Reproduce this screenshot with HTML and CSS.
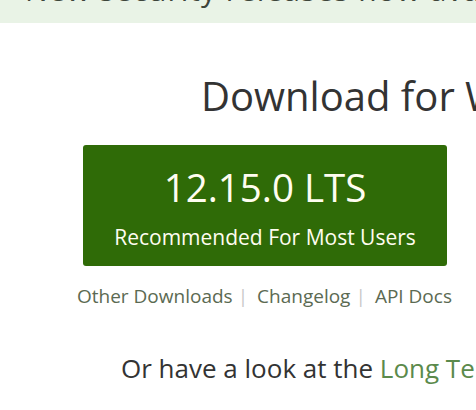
FILE: index.html
```html
<!DOCTYPE html>
<html lang="en">
<head>
<meta charset="utf-8">
<title>Download</title>
<link rel="stylesheet" href="styles.css">
</head>
<body>
<div class="banner"><p class="banner-text">New <span class="banner-link">security releases</span> now available for all release lines</p></div>
<main class="main">
  <h1 class="title">Download for Windows (x64)</h1>
  <a class="btn" href="#">
    <span class="btn-version">12.15.0 LTS</span>
    <span class="btn-sub">Recommended For Most Users</span>
  </a>
  <nav class="links">
    <a class="link" href="#">Other Downloads</a><span class="sep">|</span>
    <a class="link" href="#">Changelog</a><span class="sep">|</span>
    <a class="link" href="#">API Docs</a>
  </nav>
  <p class="more">Or have a look at the <a class="more-link" href="#">Long Term Support (LTS) schedule.</a></p>
</main>
</body>
</html>
```
FILE: styles.css
```css
html, body {
  margin: 0;
  padding: 0;
  background: #fff;
  overflow: hidden;
}
body {
  width: 476px;
  height: 410px;
  font-family: "Open Sans", "Liberation Sans", sans-serif;
  color: #333;
}
.banner {
  height: 23px;
  background: #e9f3e6;
  overflow: hidden;
}
.banner-text {
  margin: -28px 0 0 25px;
  font-size: 30px;
  line-height: 36px;
  letter-spacing: 1px;
  white-space: nowrap;
  color: #3e463b;
}
.banner-link {
  color: #3e463b;
}
.main {
  display: flex;
  flex-direction: column;
  align-items: flex-start;
}
.title {
  margin: 48px 0 0 201px;
  font-size: 40px;
  font-weight: 400;
  line-height: 50px;
  white-space: nowrap;
  color: #333;
}
.btn {
  margin: 24px 0 0 83px;
  width: 364px;
  height: 121px;
  box-sizing: border-box;
  background: #2f6b07;
  border-radius: 3px;
  display: flex;
  flex-direction: column;
  align-items: center;
  text-decoration: none;
  color: #fffdf0;
  padding-top: 18px;
}
.btn-version {
  font-size: 38.5px;
  line-height: 48px;
}
.btn-sub {
  margin-top: 13px;
  font-size: 21px;
  line-height: 26px;
}
.links {
  margin: 17px 0 0 77px;
  display: flex;
  align-items: center;
  font-size: 19px;
  line-height: 26px;
  white-space: nowrap;
}
.link {
  color: #5b6a52;
  text-decoration: none;
}
.sep {
  color: #c8c8c8;
  margin: 0 9px 0 5px;
}
.more {
  margin: 42px 0 0 121px;
  font-size: 26px;
  line-height: 34px;
  white-space: nowrap;
  color: #333;
}
.more-link {
  color: #5b8a4c;
  text-decoration: none;
}
```
